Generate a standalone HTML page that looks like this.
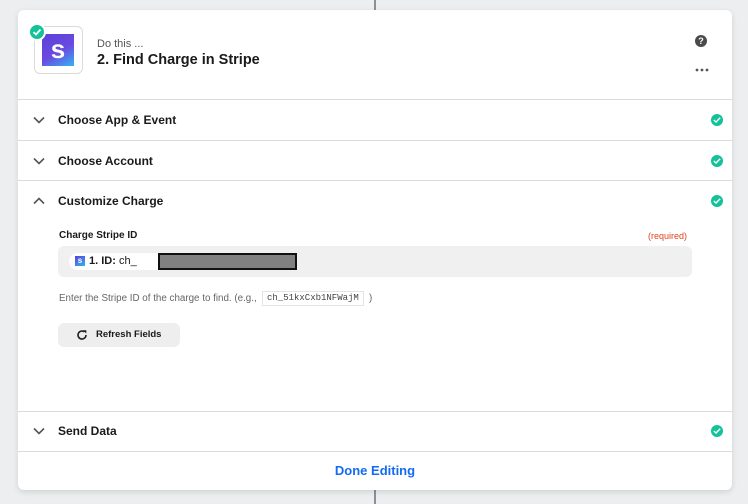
<!DOCTYPE html>
<html><head><style>
*{box-sizing:border-box;margin:0;padding:0}
body{width:748px;height:504px;background:#eceeef;font-family:"Liberation Sans",sans-serif;position:relative;overflow:hidden}
.line{position:absolute;left:374px;width:2px;background:#8a9195}
.card{position:absolute;left:18px;top:10px;width:714px;height:480px;background:#fff;border-radius:6px;box-shadow:0 2px 6px rgba(0,0,0,.12)}
.div{position:absolute;left:0;right:0;height:1px;background:#d9dcdd}
.t{position:absolute;white-space:nowrap}
.row{position:absolute;left:0;right:0;height:40px}
.row .lab{position:absolute;left:40px;top:13px;font-size:12px;font-weight:bold;color:#1a1a1a}
.chev{position:absolute;left:15px;top:14px}
.ok{position:absolute;right:9px;top:14px;width:12px;height:12px;border-radius:50%;background:#13c29a}
.ok svg{position:absolute;left:2px;top:3px}
</style></head><body>
<div class="line" style="top:0;height:10px"></div>
<div class="line" style="top:490px;height:14px"></div>
<div class="card">
  <div style="position:absolute;left:16px;top:16px;width:49px;height:48px;border:1px solid #d9dcdd;border-radius:6px"></div>
  <div style="position:absolute;left:24px;top:24px;width:32px;height:32px;background:linear-gradient(150deg,#5b40d8 0%,#6a4be0 55%,#33b4f2 100%);color:#fff;font-weight:bold;font-size:26px;text-align:center;line-height:30px">s</div>
  <div style="position:absolute;left:10px;top:13px;width:18px;height:18px;border-radius:50%;background:#13c29a;border:2px solid #fff"><svg width="14" height="14" style="position:absolute;left:0;top:0" viewBox="0 0 14 14"><path d="M3.5 7.2 6 9.5 10.5 4.5" stroke="#fff" stroke-width="1.8" fill="none"/></svg></div>
  <div class="t" style="left:79px;top:28px;font-size:11px;color:#555">Do this ...</div>
  <div class="t" style="left:79px;top:42px;font-size:14.5px;font-weight:bold;color:#1a1a1a">2. Find Charge in Stripe</div>
  <div style="position:absolute;left:677px;top:25px;width:12px;height:12px;border-radius:50%;background:#4a4a4a;color:#fff;font-size:9px;font-weight:bold;text-align:center;line-height:12px">?</div>
  <svg style="position:absolute;left:677px;top:58px" width="14" height="4" viewBox="0 0 14 4"><circle cx="2" cy="2" r="1.4" fill="#555"/><circle cx="7" cy="2" r="1.4" fill="#555"/><circle cx="12" cy="2" r="1.4" fill="#555"/></svg>
  <div class="div" style="top:89px"></div>

  <div class="row" style="top:90px"><svg class="chev" width="12" height="12" viewBox="0 0 12 12"><path d="M1 3.5 6 8.5 11 3.5" stroke="#555" stroke-width="1.6" fill="none"/></svg><div class="lab">Choose App &amp; Event</div><div class="ok"><svg width="8" height="6" viewBox="0 0 8 6"><path d="M.8 3 3 5 7.2.8" stroke="#fff" stroke-width="1.4" fill="none"/></svg></div></div>
  <div class="div" style="top:130px"></div>
  <div class="row" style="top:131px"><svg class="chev" width="12" height="12" viewBox="0 0 12 12"><path d="M1 3.5 6 8.5 11 3.5" stroke="#555" stroke-width="1.6" fill="none"/></svg><div class="lab">Choose Account</div><div class="ok"><svg width="8" height="6" viewBox="0 0 8 6"><path d="M.8 3 3 5 7.2.8" stroke="#fff" stroke-width="1.4" fill="none"/></svg></div></div>
  <div class="div" style="top:170px"></div>
  <div class="row" style="top:171px"><svg class="chev" width="12" height="12" viewBox="0 0 12 12"><path d="M1 8.5 6 3.5 11 8.5" stroke="#555" stroke-width="1.6" fill="none"/></svg><div class="lab">Customize Charge</div><div class="ok"><svg width="8" height="6" viewBox="0 0 8 6"><path d="M.8 3 3 5 7.2.8" stroke="#fff" stroke-width="1.4" fill="none"/></svg></div></div>

  <div class="t" style="left:41px;top:220px;font-size:10px;font-weight:bold;color:#1a1a1a">Charge Stripe ID</div>
  <div class="t" style="left:630px;top:221px;font-size:9px;color:#e0431c">(required)</div>
  <div style="position:absolute;left:40px;top:236px;width:634px;height:31px;background:#f0f0f0;border-radius:6px"></div>
  <div style="position:absolute;left:51px;top:243px;width:228px;height:17px;background:#fff;border-radius:9px"></div>
  <div style="position:absolute;left:57px;top:246px;width:10px;height:10px;background:linear-gradient(150deg,#5b40d8,#33b4f2);color:#fff;font-size:8px;font-weight:bold;text-align:center;line-height:10px">s</div>
  <div class="t" style="left:71px;top:245px;font-size:11px;color:#1a1a1a"><b>1. ID:</b> ch_</div>
  <div style="position:absolute;left:140px;top:243px;width:139px;height:17px;background:#808080;border:2px solid #111"></div>
  <div class="t" style="left:41px;top:283px;font-size:9.8px;color:#666">Enter the Stripe ID of the charge to find. (e.g.,</div>
  <div class="t" style="left:244px;top:281px;height:15px;padding:1px 4px;border:1px solid #e3e3e3;font-family:'Liberation Mono',monospace;font-size:9px;color:#444">ch_51kxCxb1NFWajM</div>
  <div class="t" style="left:351px;top:283px;font-size:9.8px;color:#666">)</div>

  <div style="position:absolute;left:40px;top:313px;width:122px;height:24px;background:#eeeeee;border-radius:6px"></div>
  <svg style="position:absolute;left:58px;top:319px" width="12" height="12" viewBox="0 0 12 12"><path d="M10 6A4 4 0 1 1 8.5 2.9" stroke="#222" stroke-width="1.6" fill="none"/><path d="M7 1.2h3.3v3.3z" fill="#222"/></svg>
  <div class="t" style="left:78px;top:319px;font-size:9.5px;font-weight:bold;color:#1a1a1a">Refresh Fields</div>

  <div class="div" style="top:401px"></div>
  <div class="row" style="top:401px"><svg class="chev" width="12" height="12" viewBox="0 0 12 12"><path d="M1 3.5 6 8.5 11 3.5" stroke="#555" stroke-width="1.6" fill="none"/></svg><div class="lab">Send Data</div><div class="ok"><svg width="8" height="6" viewBox="0 0 8 6"><path d="M.8 3 3 5 7.2.8" stroke="#fff" stroke-width="1.4" fill="none"/></svg></div></div>
  <div class="div" style="top:441px"></div>
  <div class="t" style="left:0;right:0;top:453px;text-align:center;font-size:13px;font-weight:bold;color:#136bf5">Done Editing</div>
</div>
</body></html>
